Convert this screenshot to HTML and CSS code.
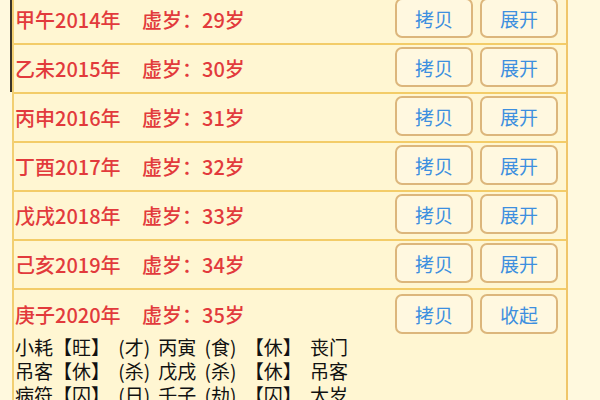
FILE: index.html
```html
<!DOCTYPE html>
<html>
<head>
<meta charset="utf-8">
<link rel="stylesheet" href="styles.css">
</head>
<body>
<div class="page">
  <div class="gutter"><div class="bar"></div></div>
  <div class="list">
    <div class="row"><span class="year">甲午2014年</span><span class="age">虚岁：29岁</span><span class="btns"><span class="btn">拷贝</span><span class="btn">展开</span></span></div>
    <div class="row"><span class="year">乙未2015年</span><span class="age">虚岁：30岁</span><span class="btns"><span class="btn">拷贝</span><span class="btn">展开</span></span></div>
    <div class="row"><span class="year">丙申2016年</span><span class="age">虚岁：31岁</span><span class="btns"><span class="btn">拷贝</span><span class="btn">展开</span></span></div>
    <div class="row"><span class="year">丁酉2017年</span><span class="age">虚岁：32岁</span><span class="btns"><span class="btn">拷贝</span><span class="btn">展开</span></span></div>
    <div class="row"><span class="year">戊戌2018年</span><span class="age">虚岁：33岁</span><span class="btns"><span class="btn">拷贝</span><span class="btn">展开</span></span></div>
    <div class="row"><span class="year">己亥2019年</span><span class="age">虚岁：34岁</span><span class="btns"><span class="btn">拷贝</span><span class="btn">展开</span></span></div>
    <div class="row last"><span class="year">庚子2020年</span><span class="age">虚岁：35岁</span><span class="btns"><span class="btn">拷贝</span><span class="btn">收起</span></span></div>
    <div class="detail">
      <div class="line">小耗【旺】 (才) 丙寅 (食) 【休】 丧门</div>
      <div class="line">吊客【休】 (杀) 戊戌 (杀) 【休】 吊客</div>
      <div class="line">病符【囚】 (日) 壬子 (劫) 【囚】 太岁</div>
    </div>
  </div>
  <div class="side"></div>
</div>
</body>
</html>
```
FILE: styles.css
```css
html, body {
  margin: 0;
  padding: 0;
  background: #fff9de;
  overflow: hidden;
}
.page {
  display: flex;
  width: 600px;
  height: 400px;
  font-family: "Noto Sans CJK SC", "Noto Sans", sans-serif;
}
.gutter {
  width: 12px;
  display: flex;
  justify-content: flex-end;
}
.bar {
  width: 2px;
  height: 92px;
  background: #3a3428;
}
.list {
  width: 552px;
  margin-top: -4px;
  background: #fff6d2;
  border-left: 2px solid #f2cf72;
  border-right: 2px solid #f0c66a;
  height: 410px;
}
.row {
  height: 47px;
  border-bottom: 2px solid #f3cc68;
  display: flex;
  align-items: center;
  color: #e23a3c;
  font-size: 20px;
  font-weight: 500;
  padding-left: 1px;
}
.row.last {
  border-bottom: none;
  height: 49px;
}
.year {
  width: 127px;
}
.age {
  flex: 1;
}
.btns {
  display: flex;
  gap: 7px;
  padding-right: 8px;
  align-self: flex-end;
  padding-bottom: 5px;
}
.btn {
  width: 74px;
  height: 36px;
  border: 2px solid #dcb67c;
  border-radius: 7px;
  background: #fff8e0;
  color: #3d8fdf;
  font-size: 19px;
  font-weight: 400;
  display: flex;
  align-items: center;
  justify-content: center;
}
.detail {
  color: #111;
  font-size: 19px;
  margin-top: -4px;
  padding-left: 1px;
}
.line {
  height: 24px;
  line-height: 24px;
  word-spacing: 4px;
  white-space: nowrap;
}
.side {
  flex: 1;
}
```
